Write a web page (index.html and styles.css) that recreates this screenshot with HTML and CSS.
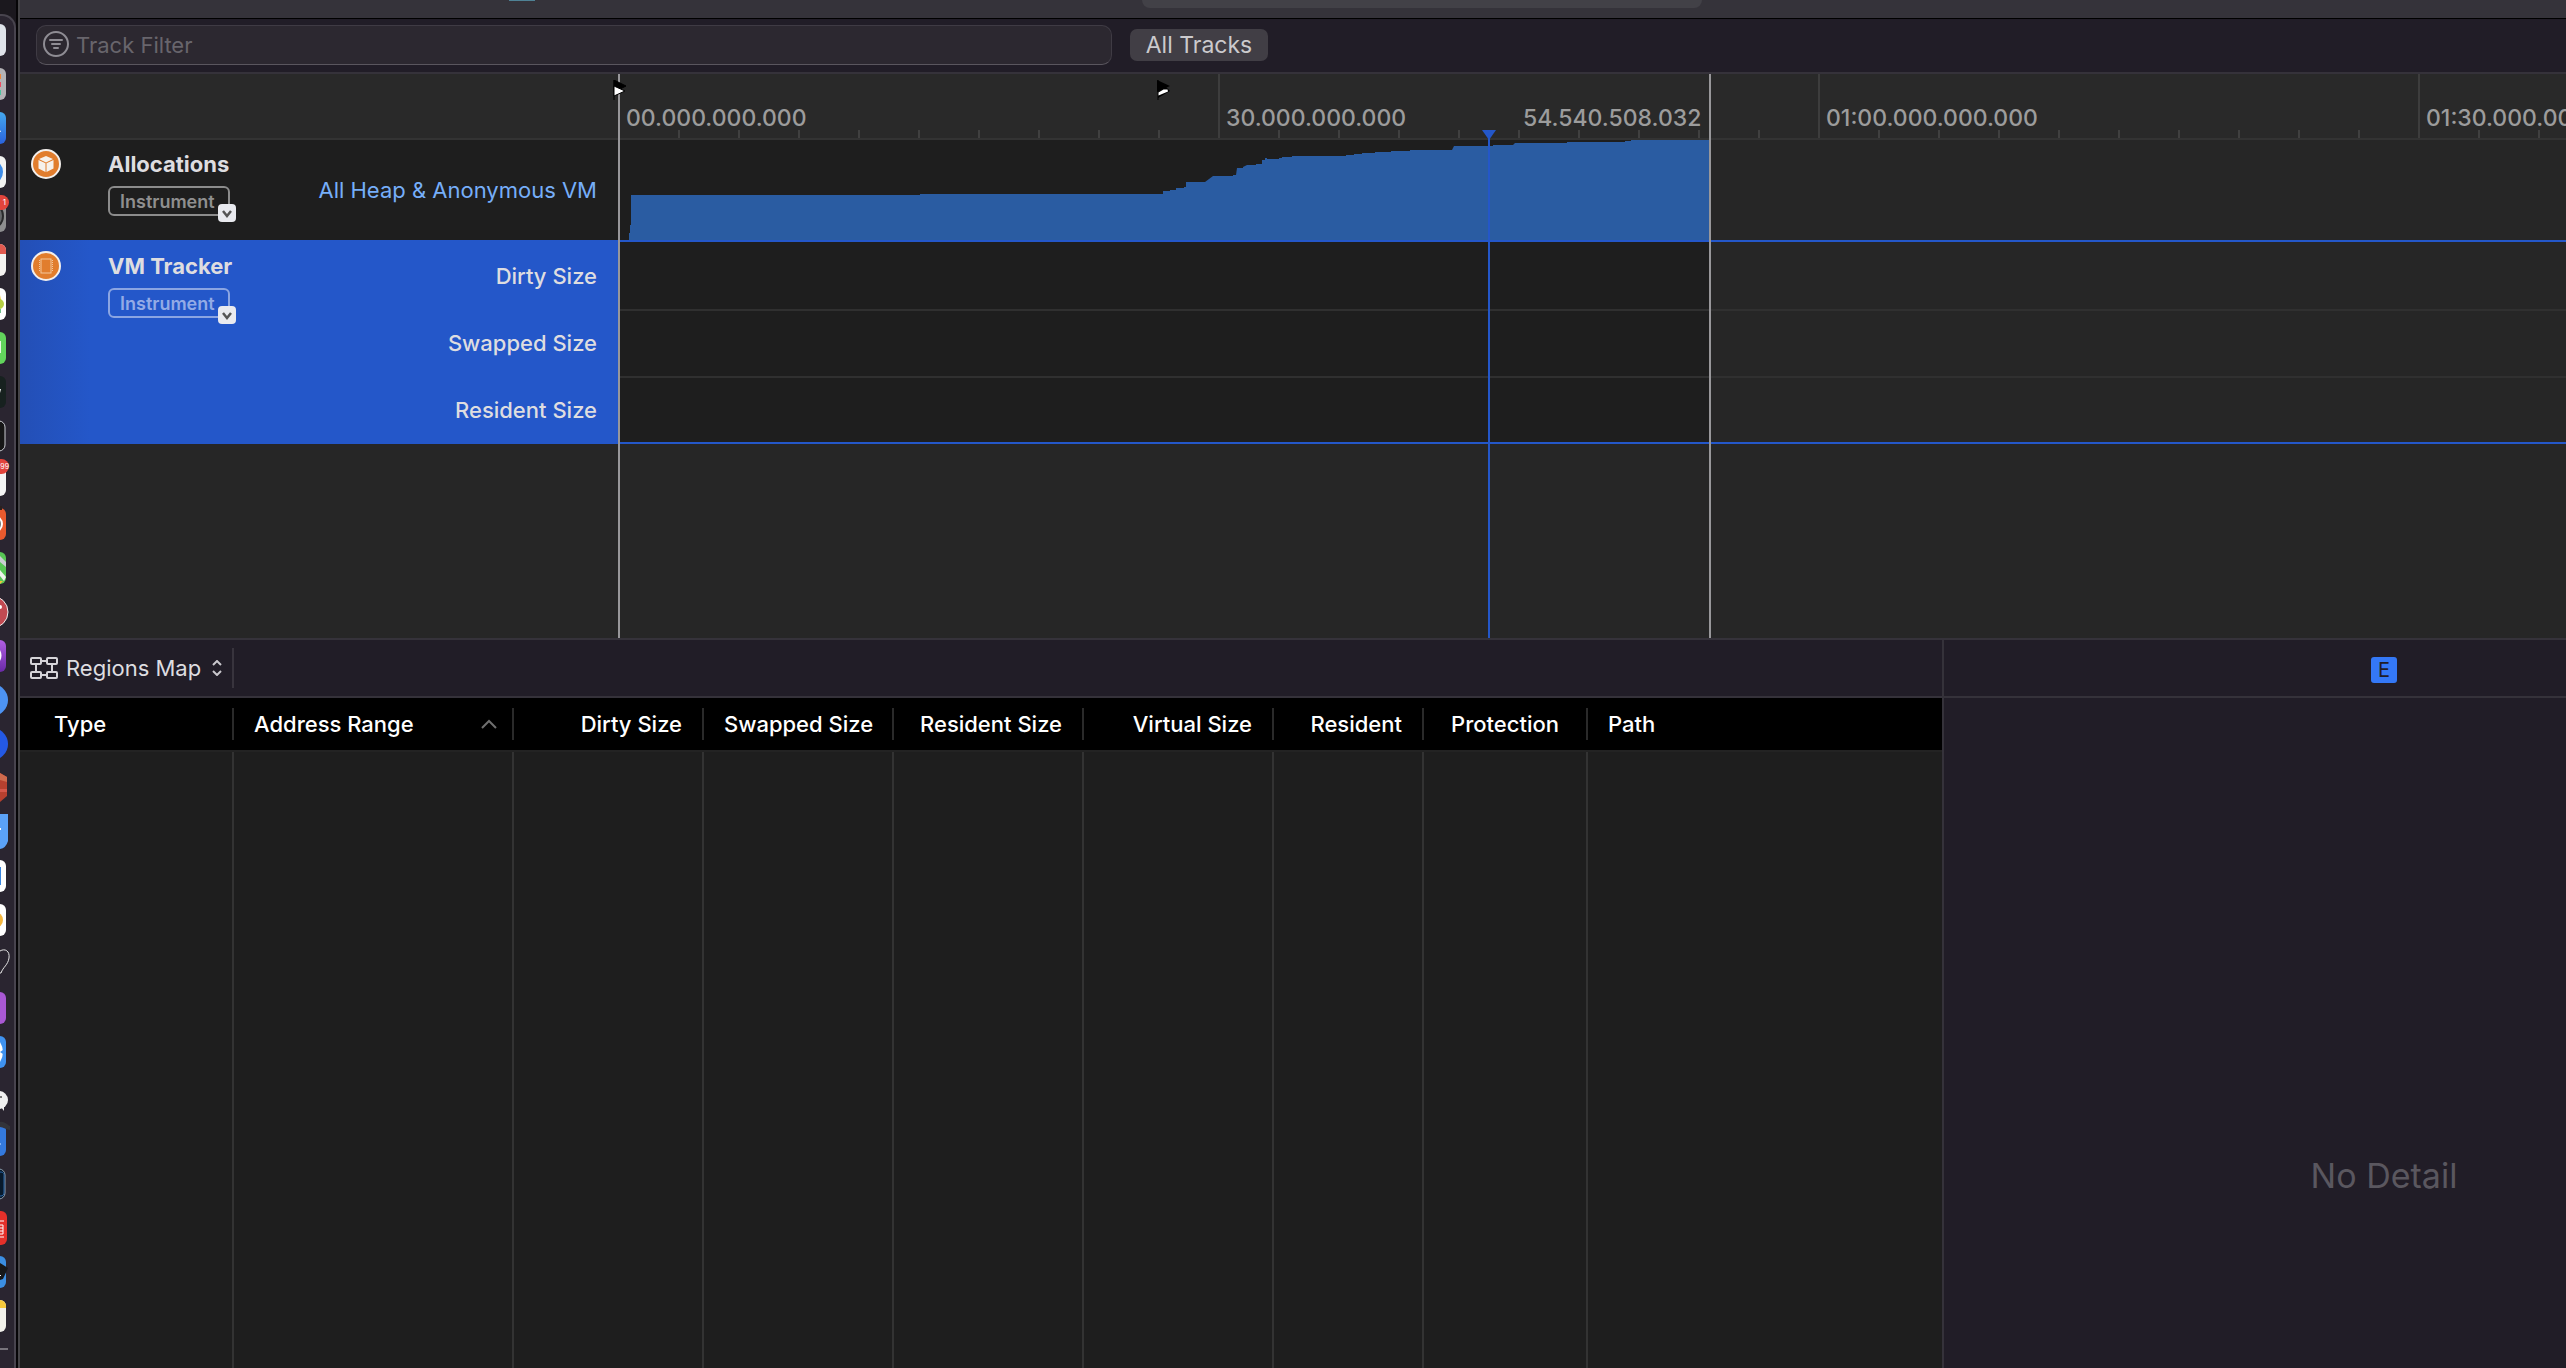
FILE: index.html
```html
<!DOCTYPE html>
<html lang="en">
<head>
<meta charset="utf-8">
<title>Instruments</title>
<link rel="stylesheet" href="styles.css">
</head>
<body>
<aside class="dock" aria-label="Dock">
  <div class="dock-tray">
    <svg class="app" viewBox="0 0 10 32"><rect x="-26" width="32" height="32" rx="6" fill="#dfe3ea"/></svg>
    <svg class="app" viewBox="0 0 10 32"><rect x="-26" width="32" height="32" rx="6" fill="#b4b3b6"/><path d="M0 6h1v5H0z" fill="#f0883a"/><path d="M0 14h1v5H0z" fill="#ef4a62"/><path d="M0 22h1v5H0z" fill="#4cc3a0"/></svg>
    <svg class="app" viewBox="0 0 10 32"><rect x="-26" width="32" height="32" rx="6" fill="url(#sky)"/><path d="M0 18l1 2H0z" fill="#fff"/></svg>
    <svg class="app" viewBox="0 0 10 32"><rect x="-26" width="32" height="32" rx="6" fill="#f2f2f2"/><circle cx="-10" cy="16" r="13" fill="#3d8be8"/></svg>
    <div class="app badged"><svg class="app" viewBox="0 0 10 32"><rect x="-26" width="32" height="32" rx="6" fill="#8e8e90"/><circle cx="-10" cy="16" r="13" fill="#66676a" stroke="#29292b" stroke-width="2"/></svg><span class="badge">1</span></div>
    <svg class="app" viewBox="0 0 10 32"><rect x="-26" width="32" height="32" rx="6" fill="#f4f3f1"/><path d="M0 0a6 6 0 0 1 6 6v4H0z" fill="#e25a50"/></svg>
    <svg class="app" viewBox="0 0 10 32"><rect x="-26" width="32" height="32" rx="6" fill="#fff"/><path d="M0 7l1 5H0z" fill="#f4c534"/><circle cx="-1" cy="16" r="5" fill="#b5cf45"/><path d="M0 21h1v4H0z" fill="#6dbd8a"/></svg>
    <svg class="app" viewBox="0 0 10 32"><rect x="-26" width="32" height="32" rx="6" fill="#62d45c"/><path d="M0 9h1v12H0z" fill="#e8f7e6"/></svg>
    <svg class="app" viewBox="0 0 10 32"><rect x="-26" width="32" height="32" rx="6" fill="#17211f"/><path d="M0 13h1l-1 4z" fill="#fff"/></svg>
    <svg class="app" viewBox="0 0 10 32"><rect x="-26" y="1" width="31" height="30" rx="6" fill="#161616" stroke="#c9cbd0"/></svg>
    <div class="app badged"><svg class="app" viewBox="0 0 10 32"><rect x="-26" width="32" height="32" rx="6" fill="#f4f4f4"/></svg><span class="badge wide">99</span></div>
    <svg class="app" viewBox="0 0 10 32"><rect x="-26" width="32" height="32" rx="6" fill="#ea5a2e"/><circle cx="-6" cy="16" r="8" fill="#777" stroke="#fff" stroke-width="2"/><path d="M0-2h2v4H0z" fill="#2b211f"/></svg>
    <svg class="app" viewBox="0 0 10 32"><rect x="-26" width="32" height="32" rx="6" fill="#58c655"/><path d="M0 4l6 6v5L0 10z" fill="#c9ced2"/><path d="M0 18l6 7-2 4-4-5z" fill="#edf2ec"/><path d="M0 29h3l-3 3z" fill="#f2c33c"/></svg>
    <svg class="app" viewBox="0 0 10 32"><circle cx="-8" cy="16" r="16" fill="#c24a52" stroke="#eee"/><circle cx="0" cy="11" r="2" fill="#fff"/></svg>
    <svg class="app" viewBox="0 0 10 32"><rect x="-26" width="32" height="32" rx="6" fill="url(#violet)"/><path d="M0 10c2 4 2 7 0 11z" fill="#fff"/></svg>
    <svg class="app" viewBox="0 0 10 32"><circle cx="-8" cy="16" r="16" fill="#4d93f3"/></svg>
    <svg class="app" viewBox="0 0 10 32"><circle cx="-8" cy="16" r="16" fill="#2459e4"/></svg>
    <svg class="app" viewBox="0 0 10 32"><path d="M0 1l7 4v19l-7 6z" fill="#b6402f"/><path d="M0 1l7 4v5l-7-2z" fill="#cf6a4d"/><path d="M0 17h7v3H0z" fill="#d4574a"/></svg>
    <svg class="app" viewBox="0 0 10 32"><path d="M0-2h8v27q-2 7-8 8z" fill="#5ba2f8"/><path d="M0 12h1v2H0z" fill="#fff"/></svg>
    <svg class="app" viewBox="0 0 10 32"><rect x="-26" width="32" height="32" rx="6" fill="#fff"/><path d="M0 7h1v18H0z" fill="#3a86e0"/></svg>
    <svg class="app" viewBox="0 0 10 32"><rect x="-26" width="32" height="32" rx="6" fill="#fff"/><circle cx="-5" cy="16" r="8" fill="#f4b63f"/></svg>
    <svg class="app" viewBox="0 0 10 32"><path d="M0 3c5-3 10 0 9 7-1 7-6 9-8 15h-1" fill="none" stroke="#e6e6e6"/></svg>
    <svg class="app" viewBox="0 0 10 32"><rect x="-26" width="32" height="32" rx="6" fill="#a958d4"/></svg>
    <svg class="app" viewBox="0 0 10 32"><rect x="-26" width="32" height="32" rx="6" fill="#3f92f0"/><path d="M0 6q6 10 0 20z" fill="#fff"/><path d="M0 16l3-2v4z" fill="#3f92f0"/></svg>
    <svg class="app" viewBox="0 0 10 32"><ellipse cx="-1" cy="20" rx="9" ry="9" fill="#f0f0f0"/><path d="M1 27l3 4V26z" fill="#f0f0f0"/><circle cx="1" cy="17" r="1" fill="#555"/></svg>
    <svg class="app" viewBox="0 0 10 32"><rect x="-26" width="32" height="32" rx="6" fill="#3479de"/><path d="M0-2c5-1 8 4 10 4v4c-3 0-7-3-10-3z" fill="#33343a"/><circle cx="0" cy="20" r="1" fill="#9cc6ff"/></svg>
    <svg class="app" viewBox="0 0 10 32"><rect x="-26" y="1" width="31" height="30" rx="6" fill="#081a2c" stroke="#8ea0b0"/><path d="M0 4c4 0 4 2 4 4v16c0 3-1 4-4 4" fill="none" stroke="#2a66a8"/></svg>
    <svg class="app" viewBox="0 0 10 32"><rect x="-26" y="-1" width="33" height="34" rx="6" fill="#e5302a"/><path d="M0 9h4M0 13h3v9H0M0 16h3M0 19h3M0 25h4" fill="none" stroke="#fff"/></svg>
    <svg class="app" viewBox="0 0 10 32"><rect x="-26" width="32" height="32" rx="6" fill="#3b8ee2"/><path d="M0 7l8 5-5 11-3 1z" fill="#17181a"/><path d="M0 19h1v1H0z" fill="#fff"/></svg>
    <svg class="app" viewBox="0 0 10 32"><rect x="-26" width="32" height="32" rx="6" fill="#f1f0ea"/><path d="M0 0a6 6 0 0 1 6 6v2H0z" fill="#f6c93b"/></svg>
    <hr class="dock-rule">
  </div>
  <svg width="0" height="0"><defs>
    <linearGradient id="sky" x2="0" y2="1"><stop stop-color="#45a8ee"/><stop offset="1" stop-color="#2a62de"/></linearGradient>
    <linearGradient id="violet" x2="0" y2="1"><stop stop-color="#b25fe4"/><stop offset="1" stop-color="#6a2aa6"/></linearGradient>
  </defs></svg>
</aside>

<main class="window">
  <header class="titlebar"><span class="status-field"></span><span class="title-icon"></span></header>

  <div class="filterbar">
    <label class="search">
      <svg width="28" height="32" viewBox="0 0 28 32" fill="none" stroke="#8f8d94" stroke-width="2" stroke-linecap="round"><ellipse cx="13" cy="15" rx="12" ry="12"/><path d="M7 11h12M9 15h8M11 19h4"/></svg>
      <input type="text" placeholder="Track Filter" aria-label="Track Filter">
    </label>
    <button class="scope" type="button">All Tracks</button>
  </div>

  <section class="timeline">
    <div class="ruler-corner"></div>
    <div class="ruler">
      <span class="mark">00.000.000.000</span>
      <span class="mark">30.000.000.000</span>
      <span class="mark">01:00.000.000.000</span>
      <span class="mark">01:30.000.000.000</span>
    </div>

    <div class="track-head">
      <svg class="track-icon" viewBox="0 0 30 30"><circle cx="15" cy="15" r="14" fill="#e17d2d" stroke="#f3efec" stroke-width="2"/><path d="M15 7l7 3-7 3.400-7-3.400zM7.500 11l7 3.300V23l-7-3.500zM22.500 11l-7 3.300V23l7-3.500z" fill="#f6f1ec"/></svg>
      <div class="track-name">
        <h2>Allocations</h2>
        <button class="kind" type="button">Instrument<span class="drop"><svg width="18" height="16" viewBox="0 0 18 16"><path d="M5 6l4 5 4-5" fill="none" stroke="#555" stroke-width="2.500"/></svg></span></button>
      </div>
      <div class="lanes heap"><span>All Heap &amp; Anonymous VM</span></div>
    </div>
    <div class="track-plot">
      <svg class="graph" viewBox="618 140 1092 100" preserveAspectRatio="none"><path fill="#2a5ca2" d="M629 240V233H630V225H631V195H920V194H1163V191H1170V190H1176V188H1184V187H1186V182H1205L1213 176H1233V175H1236L1237 168H1243V167L1247 165H1256V164H1262V160H1265V158H1267V159H1279V158H1282V157H1292V156H1346V155H1354V154H1362V153H1375V152H1391V151H1410V150H1452L1454 146H1493V145H1513L1515 143H1567V142H1625V141H1631V140H1710V240Z"/></svg>
    </div>

    <div class="track-head selected">
      <svg class="track-icon" viewBox="0 0 30 30"><circle cx="15" cy="15" r="14" fill="#e17d2d" stroke="#f3efec" stroke-width="2"/><rect x="10" y="8" width="10" height="14" fill="none" stroke="#f3c79c"/><path d="M8.500 9v12M21.500 9v12" stroke="#f3c79c" stroke-dasharray="1 1"/></svg>
      <div class="track-name">
        <h2>VM Tracker</h2>
        <button class="kind" type="button">Instrument<span class="drop"><svg width="18" height="16" viewBox="0 0 18 16"><path d="M5 6l4 5 4-5" fill="none" stroke="#555" stroke-width="2.500"/></svg></span></button>
      </div>
      <div class="lanes"><span>Dirty Size</span><span>Swapped Size</span><span>Resident Size</span></div>
    </div>
    <div class="track-plot selected"><i></i><i></i><i></i></div>

    <div class="timeline-rest"></div>

    <div class="cursors">
      <span class="edge start"></span>
      <span class="edge end"></span>
      <span class="end-time">54.540.508.032</span>
      <span class="playhead"></span>
      <svg class="flag first" viewBox="0 0 14 20"><path d="M1 0v20M1 0l12 6-12 6z" stroke="#000" fill="#000"/><path d="M1 6v10l11-5z" fill="#fff" stroke="#000"/></svg>
      <svg class="flag second" viewBox="0 0 14 20"><path d="M1 0v20" stroke="#000"/><path d="M1 18V12l8-5 4 4z" fill="#000"/><path d="M0 0l13 6-13 6z" fill="#000"/><path d="M1.500 15.500V12.500l5-3h4l.5 2z" fill="#fff"/></svg>
    </div>
  </section>

  <section class="lower">
    <div class="detail">
      <div class="detail-bar">
        <button class="view-menu" type="button">
          <svg width="28" height="24" viewBox="0 0 28 24" fill="none" stroke="#d6d4d9" stroke-width="2"><rect x="1" y="2" width="10" height="6" rx="1"/><rect x="17" y="2" width="10" height="6" rx="1"/><rect x="1" y="16" width="10" height="6" rx="1"/><rect x="17" y="16" width="10" height="6" rx="1"/><path d="M11 5h6M11 19h6M6 8v8M22 8v8"/></svg>
          Regions Map
          <svg width="10" height="16" viewBox="0 0 10 16" fill="none" stroke="#c9c7cc" stroke-width="2"><path d="M1 5l4-4 4 4M1 11l4 4 4-4"/></svg>
        </button>
      </div>
      <div class="table-wrap">
        <table>
          <colgroup><col class="c-type"><col class="c-range"><col class="c-size"><col class="c-size"><col class="c-size"><col class="c-size"><col class="c-res"><col class="c-prot"><col></colgroup>
          <thead><tr>
            <th class="type">Type</th>
            <th><span class="sorted">Address Range<svg width="16" height="10" viewBox="0 0 16 10"><path d="M1 9l7-7 7 7" fill="none" stroke="#6f6f6f" stroke-width="2"/></svg></span></th>
            <th class="num">Dirty Size</th><th class="num">Swapped Size</th><th class="num">Resident Size</th><th class="num">Virtual Size</th><th class="num">Resident</th>
            <th class="mid">Protection</th><th class="last">Path</th>
          </tr></thead>
          <tbody><tr><td></td><td></td><td></td><td></td><td></td><td></td><td></td><td></td><td></td></tr></tbody>
        </table>
      </div>
    </div>
    <aside class="inspector">
      <div class="inspector-bar"><button class="tab" type="button" aria-label="Extended Detail">E</button></div>
      <p class="empty">No Detail</p>
    </aside>
  </section>
</main>
</body>
</html>
```
FILE: styles.css
```css
* { box-sizing: border-box; }
body {
  margin: 0;
  height: 100vh;
  display: flex;
  overflow: hidden;
  background: #1b181e;
  color: #dedde0;
  font: 22px/28px Inter, "Liberation Sans", sans-serif;
}
button { font: inherit; color: inherit; border: 0; padding: 0; margin: 0; background: none; }
h2, p { margin: 0; }

/* Dock */
.dock { flex: 0 0 18px; padding-top: 14px; border-right: 2px solid #060507; overflow: hidden; }
.dock-tray {
  height: 100%;
  padding-top: 8px;
  display: flex;
  flex-direction: column;
  gap: 12px;
  background: #2a2530;
  border: solid #48444e;
  border-width: 2px 2px 0 0;
  border-top-right-radius: 14px;
}
.app { display: block; flex: none; width: 10px; height: 32px; overflow: visible; }
.badged { position: relative; }
.badge {
  position: absolute;
  top: -5px;
  left: -8px;
  width: 17px;
  height: 15px;
  padding-right: 3px;
  border-radius: 8px;
  background: #e2443c;
  color: #fff;
  font-size: 8px;
  line-height: 15px;
  text-align: right;
}
.badge.wide { padding-right: 0; font-size: 7px; }
.dock-rule { flex: none; width: 8px; height: 2px; margin: 4px 0 0; border: 0; background: #77737b; }

/* Window */
.window { flex: 1; min-width: 0; display: flex; flex-direction: column; border-left: 2px solid #454447; }
.titlebar {
  flex: 0 0 19px;
  position: relative;
  background: #35333a;
  border-bottom: 1px solid #000;
}
.status-field { display: block; width: 560px; height: 8px; margin-left: 1122px; background: #424147; border-radius: 0 0 8px 8px; }
.title-icon { position: absolute; left: 489px; top: 0; width: 26px; height: 1px; background: #4f8295; }

.filterbar {
  flex: none;
  display: flex;
  align-items: center;
  gap: 18px;
  height: 55px;
  padding: 0 0 2px 16px;
  background: #211d27;
  border-bottom: 2px solid #35323a;
}
.search {
  display: flex;
  align-items: center;
  gap: 5px;
  width: 1076px;
  height: 40px;
  padding-left: 6px;
  background: #2c2830;
  border: 1px solid #3f3b44;
  border-bottom-color: #5a565e;
  border-radius: 10px;
}
.search input { flex: 1; border: 0; outline: 0; padding: 0; background: none; color: #ddd; font: inherit; }
.search input::placeholder { color: #68656c; opacity: 1; }
.scope { width: 138px; height: 32px; border-radius: 7px; background: #413e45; color: #cbcacd; font-size: 23px; }

/* Timeline */
.timeline {
  flex: none;
  position: relative;
  display: grid;
  grid-template-columns: 598px minmax(0, 1fr);
  grid-template-rows: 66px 100px 204px 194px;
  border-bottom: 2px solid #35323a;
  overflow: hidden;
}
.ruler-corner, .ruler { background: #292929; border-bottom: 2px solid #333; }
.ruler {
  display: flex;
  overflow: hidden;
  background: repeating-linear-gradient(90deg, #404040 0 2px, transparent 2px 60px) 0 100% / 100% 8px no-repeat #292929;
}
.mark, .end-time { color: #9c9c9c; font-size: 23px; font-weight: 500; white-space: nowrap; }
.mark { flex: 0 0 600px; padding: 30px 0 0 6px; border-left: 2px solid #3d3d3d; }
.track-head { display: flex; padding: 9px 21px 0 11px; background: #1e1e1e; }
.track-head.selected { padding-top: 11px; background: linear-gradient(90deg, #234fb6, #2457c9 70px); }
.track-icon { flex: none; width: 30px; height: 30px; }
.track-name { margin-left: 47px; padding-top: 1px; }
.track-name h2 { font-size: 22px; line-height: 28px; font-weight: 700; }
.kind {
  position: relative;
  display: block;
  width: 122px;
  height: 30px;
  margin-top: 8px;
  padding-left: 10px;
  border: 2px solid #8c8c8c;
  border-radius: 6px;
  color: #8f8f8f;
  font-size: 18px;
  line-height: 28px;
  font-weight: 600;
  text-align: left;
}
.selected .kind { border-color: #8ba5e2; color: #93abe6; }
.drop { position: absolute; right: -8px; bottom: -8px; width: 18px; height: 18px; padding-top: 1px; border-radius: 4px; background: #e9eaef; line-height: 0; }
.lanes { flex: 1; display: flex; flex-direction: column; text-align: right; line-height: 67px; }
.selected .lanes { margin-top: -8px; font-weight: 500; }
.heap { line-height: 82px; color: #76aef9; }
.track-plot { background: linear-gradient(#1e1e1e, #1e1e1e) 0 0 / 1092px 100% no-repeat #262626; }
.graph { display: block; width: 1092px; height: 100px; }
.track-plot.selected { display: grid; grid-template-rows: 69px 67px 64px; border: solid #2457c9; border-width: 2px 0; }
.track-plot.selected i:not(:last-child) { border-bottom: 2px solid #303030; }
.timeline-rest { grid-column: 1 / -1; background: #262626; }

.cursors { position: absolute; inset: 0 0 0 598px; pointer-events: none; }
.edge { position: absolute; top: 0; bottom: 0; width: 2px; background: #98979a; }
.start { left: 0; }
.end { left: 1091px; }
.end-time { position: absolute; left: 905px; top: 30px; }
.playhead { position: absolute; left: 870px; top: 56px; bottom: 0; width: 2px; background: #2457c9; }
.playhead::before { content: ""; position: absolute; left: -6px; border: solid transparent; border-width: 10px 7px 0; border-top-color: #2457c9; }
.flag { position: absolute; top: 6px; width: 14px; height: 20px; }
.first { left: -5px; }
.second { left: 539px; }

/* Detail and inspector */
.lower { flex: 1; min-height: 0; display: grid; grid-template-columns: minmax(0, 1fr) 624px; }
.detail { display: flex; flex-direction: column; min-height: 0; }
.detail-bar, .inspector-bar { flex: none; height: 58px; background: #211d27; border-bottom: 2px solid #35323a; }
.detail-bar { display: flex; align-items: center; }
.view-menu {
  display: flex;
  align-items: center;
  gap: 8px;
  width: 214px;
  height: 40px;
  padding-left: 10px;
  border-right: 2px solid #38343d;
  white-space: nowrap;
}
.view-menu svg:last-child { margin-left: 3px; }
.table-wrap { flex: 1; min-height: 0; background: #1e1e1e; }
table { width: 100%; height: 100%; table-layout: fixed; border-collapse: separate; border-spacing: 0; }
.c-type { width: 214px; }
.c-range { width: 280px; }
.c-size { width: 190px; }
.c-res { width: 150px; }
.c-prot { width: 164px; }
th {
  height: 54px;
  padding: 0 20px;
  border-bottom: 2px solid #232323;
  background: linear-gradient(#2a2a2a, #2a2a2a) 100% 10px / 2px 32px no-repeat #000;
  color: #fff;
  font-weight: 500;
  text-align: left;
  white-space: nowrap;
}
th.type { padding-left: 34px; }
th.num { padding-right: 22px; text-align: right; }
th.mid { padding-right: 22px; text-align: center; }
th.last { background: #000; }
.sorted { display: flex; align-items: center; justify-content: space-between; margin-right: -3px; }
td { padding: 0; border-right: 2px solid #333; }
td:last-child { border: 0; }
.inspector { background: #211d27; border-left: 2px solid #35323a; }
.inspector-bar, .empty { padding-left: 258px; text-align: center; }
.inspector-bar { display: flex; align-items: center; justify-content: center; padding-bottom: 0; }
.tab { width: 26px; height: 26px; margin-top: 4px; border-radius: 3px; background: #3478f6; color: #211d27; font-size: 20px; line-height: 26px; }
.empty { padding-top: 456px; color: #5a575f; font-size: 34px; line-height: 44px; }
```
